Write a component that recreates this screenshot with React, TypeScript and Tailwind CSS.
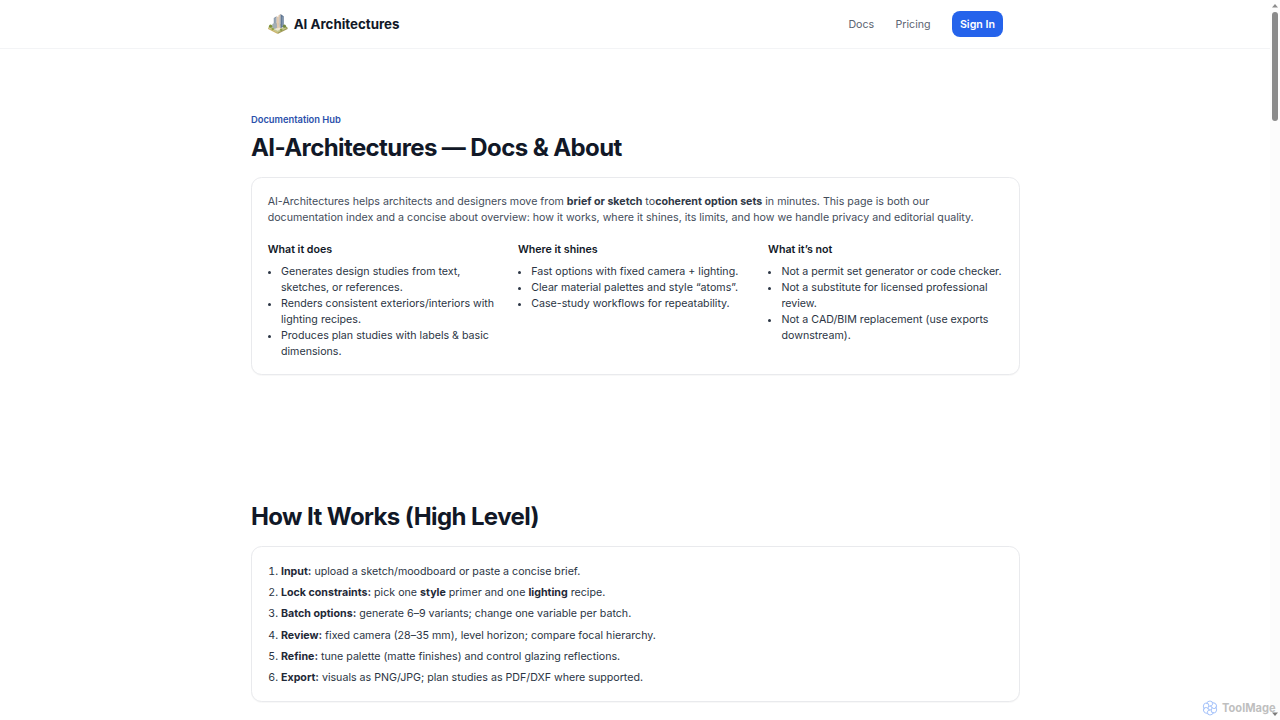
import type { ReactNode } from 'react';

const columns = [
	{
		title: 'What it does',
		items: [
			'Generates design studies from text, sketches, or references.',
			'Renders consistent exteriors/interiors with lighting recipes.',
			'Produces plan studies with labels & basic dimensions.',
		],
	},
	{
		title: 'Where it shines',
		items: [
			'Fast options with fixed camera + lighting.',
			'Clear material palettes and style “atoms”.',
			'Case-study workflows for repeatability.',
		],
	},
	{
		title: 'What it’s not',
		items: [
			'Not a permit set generator or code checker.',
			'Not a substitute for licensed professional review.',
			'Not a CAD/BIM replacement (use exports downstream).',
		],
	},
];

function Logo() {
	return (
		<svg viewBox="0 0 60 60" className="size-[21.33px]">
			<path d="M3 41 30 27 58 41 30 56z" fill="#c3c78e" />
			<path d="M3 41 30 55v4L3 45z" fill="#cdb56c" />
			<path d="M58 41 30 55v4l28-14z" fill="#a29c5a" />
			<path d="M13 42 31 32l16 9-17 9z" fill="#efe8d4" />
			<path d="M19 14 27 9v32l-8-4z" fill="#8797a8" />
			<path d="M27 9l6 3v30l-6 1z" fill="#e3c9ae" />
			<path d="M32 7 38 3v40l-6-3z" fill="#e0c7ab" />
			<path d="M38 3l9 6v29l-9 5z" fill="#5c7390" />
			<path d="M35 10v29M43 10v28M23 14v20" stroke="#b4c6d6" strokeWidth="1.5" />
			<path d="M15 31l6-3 7 3v11l-7 3-6-3z" fill="#a3aeb5" />
			<circle cx="10" cy="37" r="4.500" fill="#7d9138" />
			<circle cx="16" cy="45" r="3.500" fill="#93a343" />
			<circle cx="49" cy="37" r="4.500" fill="#728740" />
			<circle cx="40" cy="47" r="3.500" fill="#8a9a46" />
			<circle cx="54" cy="41" r="2.500" fill="#9aa256" />
		</svg>
	);
}

function Header() {
	return (
		<header className="h-[48.67px] border-b border-gray-100">
			<div className="mx-auto flex h-12 w-[768px] items-center justify-between px-4">
				<div className="flex items-center gap-[5.33px]">
					<Logo />
					<span className="font-bold text-[#111827] text-[13.333px]">AI Architectures</span>
				</div>
				<nav className="flex items-center gap-[21.33px] text-[#5b6472]">
					<a href="#docs" className="pt-[1.5px]">
						Docs
					</a>
					<a href="#pricing" className="pt-[1.5px]">
						Pricing
					</a>
					<button
						type="button"
						className="h-[26.67px] rounded-lg bg-[#2563eb] px-2 pt-[1.5px] font-semibold text-white"
					>
						Sign In
					</button>
				</nav>
			</div>
		</header>
	);
}

function Card({ children }: { children: ReactNode }) {
	return (
		<div className="-mr-px mt-[15px] rounded-[10.67px] border border-[#e9eaed] bg-white pt-[16.67px] pr-[16.67px] pb-[14.67px] pl-[15.67px] shadow-[0_1px_1px_rgba(0,0,0,0.03)]">
			{children}
		</div>
	);
}

function Overview() {
	return (
		<section id="docs" className="py-16">
			<p className="font-semibold text-[#2b50ab] text-[9.333px] leading-[13.33px]">
				Documentation Hub
			</p>
			<h1 className="mt-[9px] font-bold text-[#111827] text-[24px] leading-[26.67px] tracking-tight">
				AI-Architectures — Docs & About
			</h1>
			<Card>
				<p className="text-[#434c5a]">
					AI-Architectures helps architects and designers move from{' '}
					<strong className="font-bold text-[#2f3846]">brief or sketch</strong> to
					<strong className="font-bold text-[#2f3846]">coherent option sets</strong> in minutes.
					This page is both our documentation index and a concise about overview: how it works,
					where it shines, its limits, and how we handle privacy and editorial quality.
				</p>
				<div className="mt-4 grid grid-cols-3 gap-4">
					{columns.map((column) => (
						<div key={column.title}>
							<h3 className="font-semibold text-[#111827]">{column.title}</h3>
							<ul className="mt-[5.33px] list-disc pl-[13.33px] text-[#2b3544]">
								{column.items.map((item) => (
									<li key={item}>{item}</li>
								))}
							</ul>
						</div>
					))}
				</div>
			</Card>
		</section>
	);
}

function HowItWorks() {
	return (
		<section className="pt-[65px]">
			<h2 className="font-bold text-[#111827] text-[24px] leading-[26.67px] tracking-tight">
				How It Works (High Level)
			</h2>
			<Card>
				<ol className="list-decimal space-y-[5.33px] pl-[13.33px] text-[#2b3544] [&_strong]:text-[#1f2937]">
					<li>
						<strong>Input:</strong> upload a sketch/moodboard or paste a concise brief.
					</li>
					<li>
						<strong>Lock constraints:</strong> pick one <strong>style</strong> primer and one{' '}
						<strong>lighting</strong> recipe.
					</li>
					<li>
						<strong>Batch options:</strong> generate 6–9 variants; change one variable per batch.
					</li>
					<li>
						<strong>Review:</strong> fixed camera (28–35 mm), level horizon; compare focal
						hierarchy.
					</li>
					<li>
						<strong>Refine:</strong> tune palette (matte finishes) and control glazing reflections.
					</li>
					<li>
						<strong>Export:</strong> visuals as PNG/JPG; plan studies as PDF/DXF where supported.
					</li>
				</ol>
			</Card>
		</section>
	);
}

function Scrollbar() {
	return (
		<div className="flex w-[10px] flex-col items-center bg-[#fcfcfc] pt-1 pb-1">
			<svg viewBox="0 0 6 4" className="h-1 w-1.5" fill="#8b8b8b">
				<path d="M3 0 6 3.5H0z" />
			</svg>
			<div className="mt-1 h-[109px] w-1.5 rounded-full bg-[#8b8b8b]" />
			<svg viewBox="0 0 6 4" className="mt-auto h-1 w-1.5" fill="#7b7b7b">
				<path d="M0 .5h6L3 4z" />
			</svg>
		</div>
	);
}

const petals = [0, 60, 120, 180, 240, 300];

function Watermark() {
	return (
		<div className="absolute top-[699px] left-[1202px] flex items-center gap-[4px]">
			<svg viewBox="0 0 32 32" className="size-4" fill="none" stroke="#a9c5fa" strokeWidth="2">
				{petals.map((angle) => (
					<path
						key={angle}
						d="M16 12Q21 12 21.500 7.500 21.500 2 16 2q-6 0-7 6"
						transform={`rotate(${angle} 16 16)`}
					/>
				))}
				<circle cx="16" cy="16" r="4" />
			</svg>
			<span className="pt-px font-bold text-[#bfbfbf] text-[11.1px] leading-4">ToolMage</span>
		</div>
	);
}

export default function App() {
	return (
		<div className="relative flex h-[720px] overflow-hidden bg-white font-['Inter',sans-serif] text-[10.667px] leading-4">
			<div className="flex-1">
				<Header />
				<main className="mx-auto w-[768px]">
					<Overview />
					<HowItWorks />
				</main>
			</div>
			<Scrollbar />
			<Watermark />
		</div>
	);
}
